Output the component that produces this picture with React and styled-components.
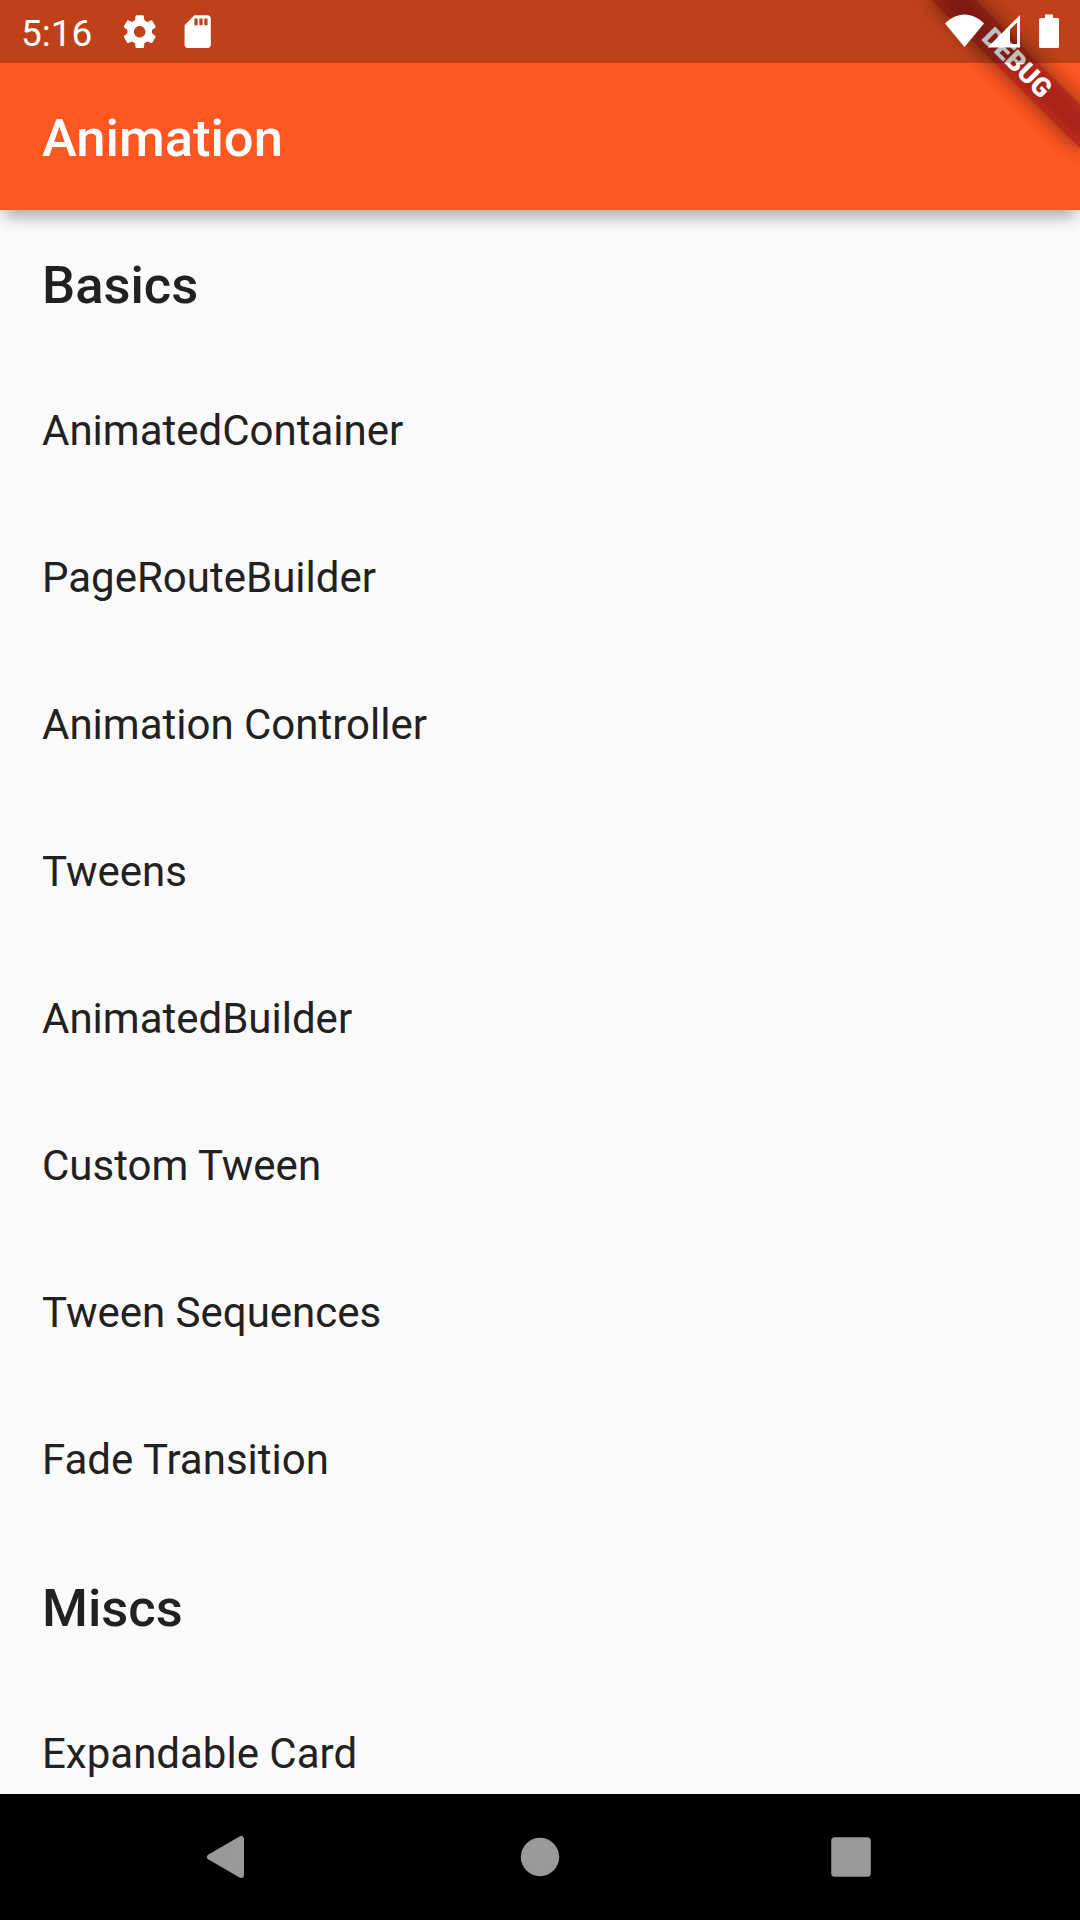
import React from "react";
import styled, { createGlobalStyle } from "styled-components";

const GlobalStyle = createGlobalStyle`
  * { box-sizing: border-box; }
  body { margin: 0; font-family: Roboto, "Noto Sans", sans-serif; }
`;

const Screen = styled.div`
  position: relative;
  display: flex;
  flex-direction: column;
  width: 1080px;
  height: 1920px;
  overflow: hidden;
  background: #fafafa;
`;

const StatusBar = styled.header`
  position: relative;
  z-index: 4;
  flex: none;
  display: flex;
  justify-content: space-between;
  height: 63px;
  padding: 0 20px 0 21px;
  background: rgba(0, 0, 0, 0.25);
`;

const StatusGroup = styled.div`
  display: flex;
  align-items: center;
`;

const Clock = styled.span`
  width: 99px;
  padding-top: 4px;
  color: #fff;
  font-size: 37px;
  line-height: 44px;
  white-space: nowrap;
`;

const StatusIcon = styled.svg`
  display: block;
  flex: none;
  width: ${(p) => p.$w}px;
  height: ${(p) => p.$h}px;
  margin-left: ${(p) => p.$gap || 0}px;
  fill: #fff;
`;

const AppBar = styled.div`
  position: relative;
  z-index: 2;
  flex: none;
  display: flex;
  align-items: center;
  height: 210px;
  margin-top: -63px;
  padding: 65px 42px 0;
  background: #ff5722;
  box-shadow: 0 11px 15px -4px rgba(0, 0, 0, 0.32);
`;

const Title = styled.h1`
  margin: 0;
  color: #fff;
  font-size: 52.5px;
  font-weight: 500;
  line-height: 62px;
`;

const BannerLayer = styled.div`
  position: absolute;
  z-index: 3;
  top: 0;
  right: 0;
  width: 0;
  height: 0;
  transform: rotate(45deg);
`;

const BannerShadow = styled.div`
  position: absolute;
  left: -105px;
  top: 73.5px;
  width: 210px;
  height: 31.5px;
  background: rgba(0, 0, 0, 0.5);
  filter: blur(10.4px);
`;

const BannerStrip = styled.div`
  position: absolute;
  left: -105px;
  top: 73.5px;
  width: 210px;
  height: 31.5px;
  background: rgba(183, 28, 28, 0.627);
  color: #fff;
  font-size: 26.775px;
  font-weight: 900;
  line-height: 31.5px;
  text-align: center;
`;

const List = styled.main`
  flex: 1;
  min-height: 0;
  overflow: hidden;
`;

const Row = styled.div`
  display: flex;
  align-items: center;
  height: 147px;
  padding: ${(p) => (p.$heading ? 4 : 2)}px 42px 0;
  color: #212121;
  font-size: ${(p) => (p.$heading ? 52.5 : 42)}px;
  font-weight: ${(p) => (p.$heading ? 500 : 400)};
  line-height: 1.2;
`;

const NavBar = styled.nav`
  flex: none;
  display: flex;
  align-items: center;
  justify-content: space-between;
  height: 126px;
  padding: 0 179px 0 175px;
  background: #000;
`;

const NavButton = styled.button`
  display: grid;
  place-items: center;
  width: 100px;
  height: 100px;
  padding: 0;
  border: 0;
  background: none;
`;

const NavIcon = styled.svg`
  width: 48px;
  height: 48px;
  fill: #999;
  stroke: #999;
`;

const sections = [
  {
    title: "Basics",
    items: [
      "AnimatedContainer",
      "PageRouteBuilder",
      "Animation Controller",
      "Tweens",
      "AnimatedBuilder",
      "Custom Tween",
      "Tween Sequences",
      "Fade Transition",
    ],
  },
  { title: "Miscs", items: ["Expandable Card"] },
];

export default function App() {
  return (
    <Screen>
      <GlobalStyle />
      <StatusBar>
        <StatusGroup>
          <Clock>5:16</Clock>
          <StatusIcon $w={39.4} $h={39.4} viewBox="0 0 24 24">
            <path d="M19.43 12.98c.04-.32.07-.64.07-.98s-.03-.66-.07-.98l2.11-1.65c.19-.15.24-.42.12-.64l-2-3.46c-.12-.22-.39-.3-.61-.22l-2.49 1c-.52-.4-1.08-.73-1.69-.98l-.38-2.65C14.46 2.18 14.25 2 14 2h-4c-.25 0-.46.18-.49.42l-.38 2.65c-.61.25-1.17.59-1.69.98l-2.49-1c-.23-.09-.49 0-.61.22l-2 3.46c-.13.22-.07.49.12.64l2.11 1.65c-.04.32-.07.65-.07.98s.03.66.07.98l-2.11 1.65c-.19.15-.24.42-.12.64l2 3.46c.12.22.39.3.61.22l2.49-1c.52.4 1.08.73 1.69.98l.38 2.65c.03.24.24.42.49.42h4c.25 0 .46-.18.49-.42l.38-2.65c.61-.25 1.17-.59 1.69-.98l2.49 1c.23.09.49 0 .61-.22l2-3.46c.12-.22.07-.49-.12-.64l-2.11-1.65zM12 15.500c-1.930 0-3.500-1.570-3.500-3.500s1.570-3.500 3.500-3.500 3.500 1.570 3.500 3.500-1.570 3.500-3.500 3.500z" />
          </StatusIcon>
          <StatusIcon $w={39.4} $h={39.4} $gap={19} viewBox="0 0 24 24">
            <path d="M18 2h-8L4.020 8 4 20c0 1.100.9 2 2 2h12c1.100 0 2-.9 2-2V4c0-1.100-.9-2-2-2zm-6 6h-2V4h2v4zm3 0h-2V4h2v4zm3 0h-2V4h2v4z" />
          </StatusIcon>
        </StatusGroup>
        <StatusGroup>
          <StatusIcon $w={40} $h={40} viewBox="0 0 40 40">
            <path d="M20.500 35 1 11.500C6.500 6 13 2.500 20.500 2.500S34.500 6 40 11.500Z" />
          </StatusIcon>
          <StatusIcon $w={34} $h={40} $gap={2} viewBox="0 0 34 40">
            <path fillRule="evenodd" d="M34 3V35.500H1.500ZM31 10.500 24 17.500V32H31Z" />
          </StatusIcon>
          <StatusIcon $w={22} $h={40} $gap={18} viewBox="0 0 22 40">
            <path d="M7 2.500H15V6H19.500Q21 6 21 7.500V34.500Q21 36 19.500 36H2.500Q1 36 1 34.500V7.500Q1 6 2.500 6H7Z" />
          </StatusIcon>
        </StatusGroup>
      </StatusBar>
      <AppBar>
        <Title>Animation</Title>
      </AppBar>
      <BannerLayer>
        <BannerShadow />
        <BannerStrip>DEBUG</BannerStrip>
      </BannerLayer>
      <List>
        {sections.map((s) => (
          <React.Fragment key={s.title}>
            <Row $heading>{s.title}</Row>
            {s.items.map((i) => (
              <Row key={i}>{i}</Row>
            ))}
          </React.Fragment>
        ))}
      </List>
      <NavBar>
        <NavButton aria-label="Back">
          <NavIcon viewBox="0 0 48 48" strokeWidth="6" strokeLinejoin="round">
            <path d="M40 6V42L9 24Z" />
          </NavIcon>
        </NavButton>
        <NavButton aria-label="Home">
          <NavIcon viewBox="0 0 48 48" strokeWidth="0">
            <circle cx="26" cy="24" r="19.2" />
          </NavIcon>
        </NavButton>
        <NavButton aria-label="Recents">
          <NavIcon viewBox="0 0 48 48" strokeWidth="0">
            <rect x="4.200" y="4.200" width="39.600" height="39.600" rx="3.500" />
          </NavIcon>
        </NavButton>
      </NavBar>
    </Screen>
  );
}
